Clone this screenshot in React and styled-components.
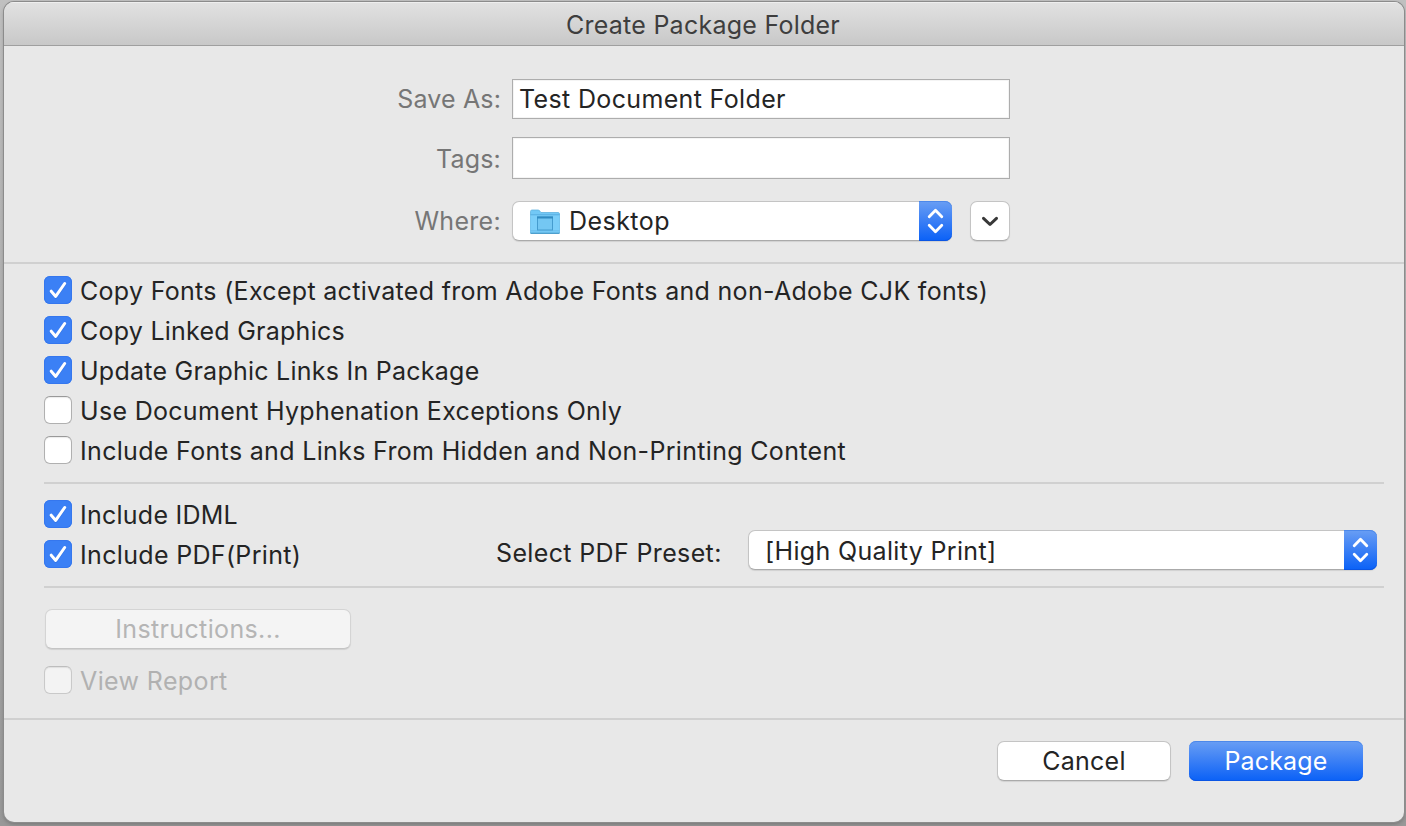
import React from "react";
import styled, { createGlobalStyle, css } from "styled-components";

const Global = createGlobalStyle`
  * { box-sizing: border-box; }
  html, body { margin: 0; height: 100%; overflow: hidden; }
  body {
    font-family: Inter, "Liberation Sans", sans-serif;
    font-size: 25px;
    line-height: 40px;
    color: #242424;
    background: linear-gradient(#c0c0c0, #a9a9a9 60%, #989898);
  }
`;

const Desktop = styled.div`
  height: 826px;
  padding: 2px 2px 4px 4px;
`;

const Window = styled.main`
  width: 1400px;
  height: 820px;
  display: flex;
  flex-direction: column;
  border-radius: 10px;
  background: #e8e8e8;
  box-shadow: 0 0 0 1px #8c8c8c, 0 2px 4px rgba(0, 0, 0, 0.25);
  overflow: hidden;
`;

const TitleBar = styled.header`
  height: 44px;
  flex: none;
  display: flex;
  justify-content: center;
  padding-top: 3px;
  padding-right: 2px;
  border-bottom: 1px solid #9f9f9f;
  box-shadow: inset 0 1px 0 #efefef;
  background: linear-gradient(#e2e2e2, #c8c8c8);
  color: #3e3e3e;
`;

const Text = styled.span`
  white-space: pre;
  letter-spacing: ${(p) => p.$track ?? 0.3}px;
`;

const Fields = styled.section`
  height: 218px;
  border-bottom: 2px solid #d0d0d0;
  padding: 33px 0 0;
  flex: none;
`;

const Field = styled.div`
  display: grid;
  grid-template-columns: 497px auto;
  column-gap: 11px;
  align-items: center;
  height: ${(p) => p.$height || 40}px;
  margin-bottom: ${(p) => p.$gap || 0}px;
`;

const Label = styled.label`
  padding-top: ${(p) => p.$drop || 0}px;
  text-align: right;
  color: #767676;
`;

const Input = styled.div`
  width: 498px;
  height: 100%;
  padding-left: 6px;
  line-height: 38px;
  border: 1px solid #adadad;
  background: #fff;
  box-shadow: inset 0 0 0 1px #f4f4f4;
`;

const Controls = styled.div`
  display: flex;
  gap: 18px;
`;

const raised = css`
  background: #fff;
  border: 1px solid #c4c4c4;
  border-bottom-color: #aaa;
  border-radius: 7px;
  box-shadow: 0 1px 1px rgba(0, 0, 0, 0.1);
`;

const blue = css`
  background: linear-gradient(#699ef4, #3a7ff5 50%, #0a61f7);
  box-shadow: inset 0 1px 0 #4c88ea, inset 0 -1px 0 #0a55e4;
`;

const Select = styled.div`
  ${raised}
  width: ${(p) => p.$width}px;
  height: 40px;
  display: flex;
  align-items: center;
  padding-left: ${(p) => p.$inset}px;
  line-height: 38px;
`;

const Stepper = styled.div`
  ${blue}
  width: 33px;
  height: 40px;
  margin: -1px -1px -1px auto;
  border-radius: 0 7px 7px 0;
  svg { display: block; }
`;

const Disclosure = styled.div`
  ${raised}
  width: 40px;
  height: 40px;
  svg { display: block; margin: -1px; }
`;

const Folder = styled.svg`
  width: 32px;
  height: 26px;
  margin: 2px 8px 0 0;
  flex: none;
`;

const Group = styled.section`
  height: ${(p) => p.$height}px;
  flex: none;
  margin: 0 20px 0 40px;
  padding-top: ${(p) => p.$top}px;
  border-bottom: 2px solid #d0d0d0;
`;

const Option = styled.div`
  display: flex;
  align-items: center;
  gap: 8px;
  height: 40px;
  color: ${(p) => (p.$disabled ? "#b1b1b1" : "inherit")};
  ${Text} { padding-top: 2px; }
`;

const Box = styled.span`
  width: 28px;
  height: 28px;
  flex: none;
  border-radius: 6px;
  ${(p) =>
    p.$on
      ? css`
          background: #3b80f5;
          box-shadow: inset 0 0 0 1px #3577ee;
        `
      : css`
          background: ${p.$disabled ? "#f3f3f3" : "#fff"};
          border: 1px solid ${p.$disabled ? "#c9c9c9" : "#b0b0b0"};
          border-top-color: ${p.$disabled ? "#bdbdbd" : "#999"};
          box-shadow: inset 0 1px 1px rgba(0, 0, 0, 0.08);
        `}
  svg { display: block; }
`;

const PdfRow = styled.div`
  display: flex;
  align-items: flex-start;
`;

const PdfOption = styled(Option)`
  width: 452px;
`;

const PresetLabel = styled.div`
  width: 252px;
  line-height: 38px;
`;

const PresetSelect = styled.div`
  margin-top: -4px;
  ${Text} { padding-top: 2px; }
`;

const Button = styled.button`
  ${raised}
  ${(p) => p.$primary && css`${blue} border: 0;`}
  ${(p) =>
    p.$disabled &&
    css`
      background: #f4f4f4;
      border-color: #d4d4d4;
      border-bottom-color: #c4c4c4;
    `}
  width: ${(p) => p.$width}px;
  height: 40px;
  padding: 0;
  font: inherit;
  line-height: 38px;
  color: ${(p) => (p.$primary ? "#fff" : p.$disabled ? "#b5b5b5" : "#242424")};
`;

const ReportArea = styled(Group)`
  margin-right: 0;
  margin-left: 0;
  padding-left: 40px;
  ${Button} { display: block; margin: 0 0 11px 1px; }
`;

const Footer = styled.footer`
  display: flex;
  justify-content: flex-end;
  gap: 18px;
  padding: 21px 41px 0 0;
`;

function Chevrons() {
  return (
    <svg width="33" height="40" fill="none" stroke="#fff" strokeWidth="2.8" strokeLinecap="round" strokeLinejoin="round">
      <path d="M10.2 15.8 16.5 9.2 22.8 15.8M10.2 24.2 16.5 30.8 22.8 24.2" />
    </svg>
  );
}

function Check({ on, disabled, label, track }) {
  return (
    <Option $disabled={disabled}>
      <Tick on={on} disabled={disabled} />
      <Text $track={track}>{label}</Text>
    </Option>
  );
}

function Tick({ on, disabled }) {
  return (
    <Box $on={on} $disabled={disabled}>
      {on && (
        <svg width="28" height="28" fill="none" strokeLinecap="round" strokeLinejoin="round">
          <path d="M7.2 16.1 11.7 21.3 20.7 8.4" stroke="#235fc8" strokeOpacity=".35" strokeWidth="3" />
          <path d="M7.2 15.2 11.7 20.4 20.7 7.5" stroke="#fff" strokeWidth="3" />
        </svg>
      )}
    </Box>
  );
}

export default function App() {
  return (
    <>
      <Global />
      <Desktop>
        <Window>
          <TitleBar><Text $track={0.25}>Create Package Folder</Text></TitleBar>
          <Fields>
            <Field $gap={18}>
              <Label><Text $track={0.15}>Save As:</Text></Label>
              <Input><Text $track={0.35}>Test Document Folder</Text></Input>
            </Field>
            <Field $height={42} $gap={22}>
              <Label $drop={2}><Text $track={0.2}>Tags:</Text></Label>
              <Input />
            </Field>
            <Field>
              <Label><Text>Where:</Text></Label>
              <Controls>
                <Select $width={440} $inset={16}>
                  <Folder viewBox="0 0 32 26">
                    <path d="M1.5 24V2.5Q1.5 1 3 1H9Q10 1 11 2.2L12 3.5H29Q30.5 3.5 30.5 5V24Z" fill="#72c8f6" stroke="#5fb2df" strokeWidth=".8" />
                    <path d="M1.5 6H30.5V23.3H1.5Z" fill="#7bcef9" />
                    <path d="M1.5 5.8H30.5" stroke="#58ade0" />
                    <path d="M1.5 21.8H30.5" stroke="#68b9e7" strokeWidth=".8" />
                    <path d="M1.5 24.3H30.5" stroke="#4e9fcd" strokeWidth="1.2" />
                    <rect x="8.5" y="8" width="15" height="13" fill="#74c7f3" stroke="#459ccf" />
                    <path d="M8 8.5H24" stroke="#318bc2" strokeWidth="1.8" />
                  </Folder>
                  <Text $track={0.45}>Desktop</Text>
                  <Stepper><Chevrons /></Stepper>
                </Select>
                <Disclosure>
                  <svg width="40" height="40" fill="none" stroke="#383838" strokeWidth="3" strokeLinecap="round" strokeLinejoin="round">
                    <path d="M13.5 17.3 20 23.5 26.5 17.3" />
                  </svg>
                </Disclosure>
              </Controls>
            </Field>
          </Fields>
          <Group $height={220} $top={6}>
            <Check on track={0.305} label="Copy Fonts (Except activated from Adobe Fonts and non-Adobe CJK fonts)" />
            <Check on track={0.25} label="Copy Linked Graphics" />
            <Check on track={0.25} label="Update Graphic Links In Package" />
            <Check track={0.305} label="Use Document Hyphenation Exceptions Only" />
            <Check track={0.325} label="Include Fonts and Links From Hidden and Non-Printing Content" />
          </Group>
          <Group $height={104} $top={10}>
            <Check on track={0.25} label="Include IDML" />
            <PdfRow>
              <PdfOption><Tick on /><Text $track={0.33}>Include PDF(Print)</Text></PdfOption>
              <PresetLabel><Text $track={0.36}>Select PDF Preset:</Text></PresetLabel>
              <PresetSelect>
                <Select $width={629} $inset={16}>
                  <Text $track={0.34}>[High Quality Print]</Text>
                  <Stepper><Chevrons /></Stepper>
                </Select>
              </PresetSelect>
            </PdfRow>
          </Group>
          <ReportArea $height={132} $top={21}>
            <Button $disabled $width={306}><Text $track={0.37}>Instructions...</Text></Button>
            <Check disabled track={0.38} label="View Report" />
          </ReportArea>
          <Footer>
            <Button $width={174}><Text $track={0.25}>Cancel</Text></Button>
            <Button $primary $width={174}><Text $track={0.15}>Package</Text></Button>
          </Footer>
        </Window>
      </Desktop>
    </>
  );
}
